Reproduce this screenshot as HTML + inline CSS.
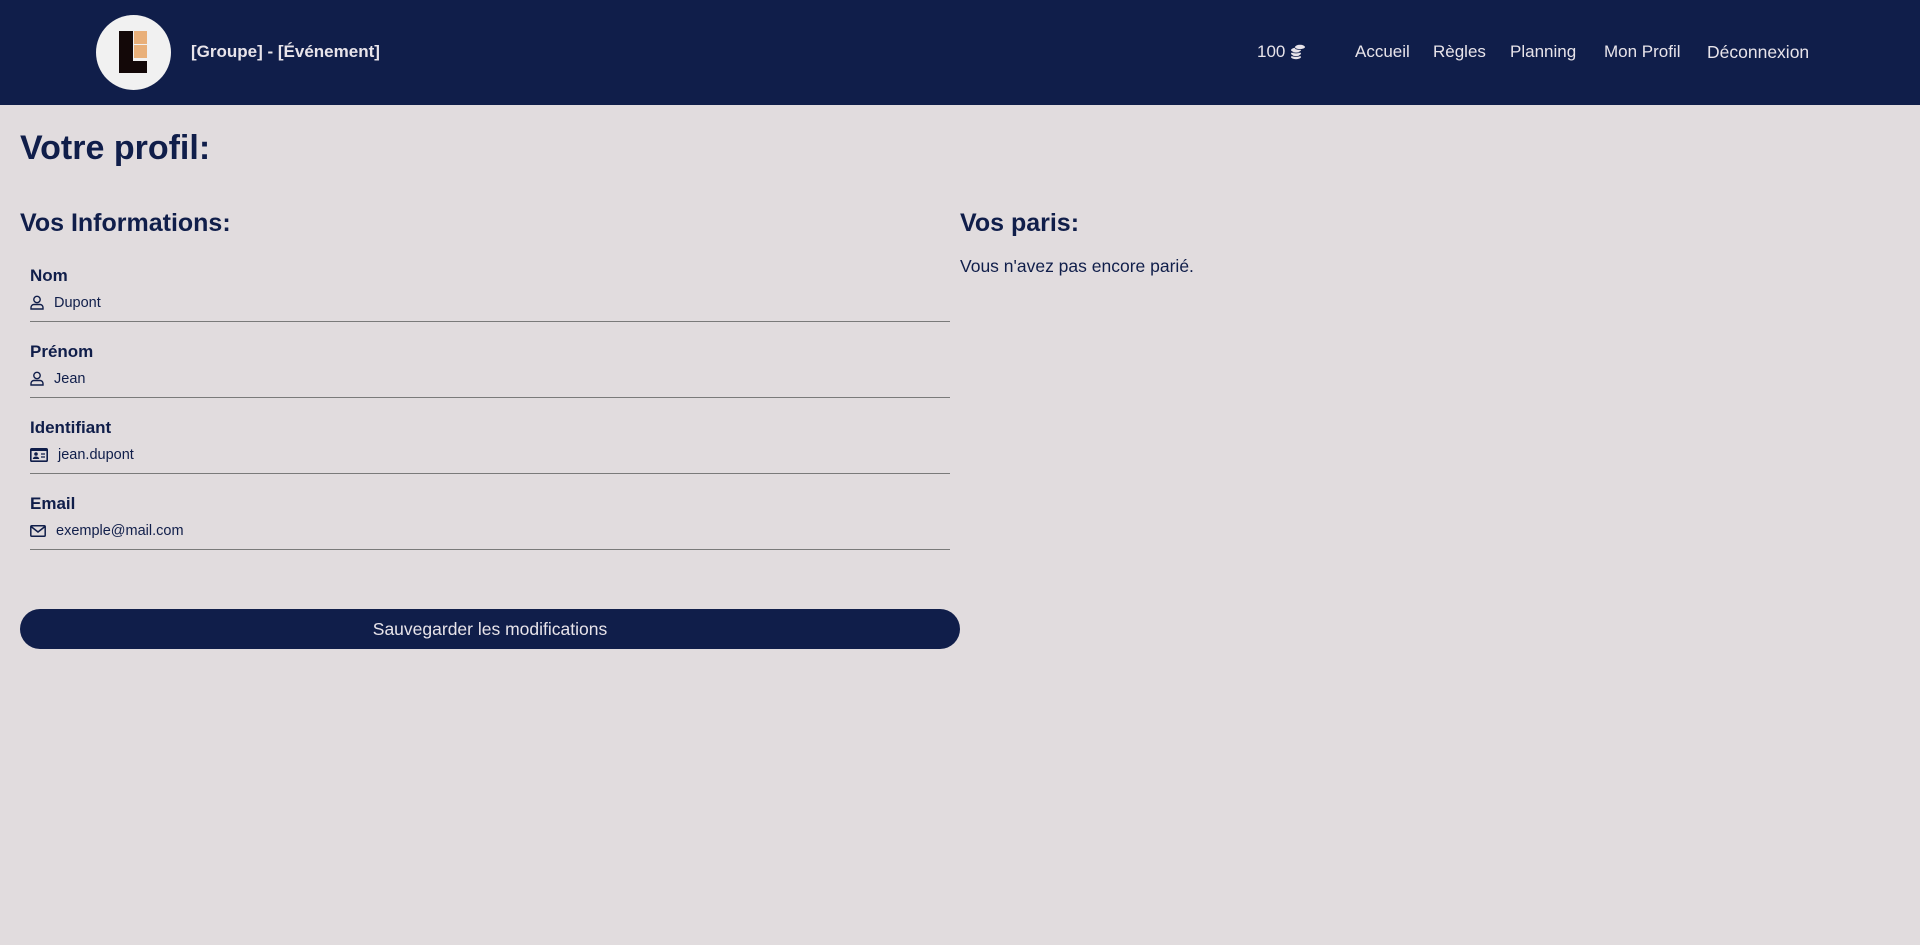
<!DOCTYPE html>
<html><head><meta charset="utf-8"><style>
*{margin:0;padding:0;box-sizing:border-box}
body{width:1920px;height:945px;background:#e1dcde;font-family:"Liberation Sans",sans-serif;color:#101e4a;position:relative;overflow:hidden}
.hdr{position:absolute;left:0;top:0;width:1920px;height:105px;background:#101e4a}
.a{position:absolute;white-space:nowrap}
.nav{color:#e8e4ea;font-size:17px;top:42px}
.lbl{font-weight:bold;font-size:17px;left:30px;color:#101e4a}
.val{font-size:14.5px;color:#101e4a}
.line{position:absolute;left:30px;width:920px;height:1px;background:#7a7a7a}
</style></head><body>
<div class="hdr"></div>
<div class="a" style="left:96px;top:15px;width:75px;height:75px;border-radius:50%;background:#f1f1f1"></div>
<div class="a" style="left:119px;top:31px;width:14px;height:42px;background:#130808"></div>
<div class="a" style="left:119px;top:61px;width:28px;height:12px;background:#130808"></div>
<div class="a" style="left:134px;top:31px;width:13px;height:13px;background:#e9b07a"></div>
<div class="a" style="left:134px;top:45px;width:13px;height:13px;background:#e9b07a"></div>
<div class="a" style="left:191px;top:42px;color:#e8e4ea;font-size:17px;font-weight:bold">[Groupe] - [Événement]</div>
<div class="a nav" style="left:1257px">100</div>
<svg class="a" style="left:1290px;top:44px" width="16" height="16" viewBox="0 0 16 16"><g fill="#e8e4ea"><ellipse cx="6" cy="13" rx="5" ry="2.2"/><ellipse cx="6" cy="9.5" rx="5" ry="2.2"/><ellipse cx="6" cy="6" rx="5" ry="2.2"/><ellipse cx="10" cy="3" rx="5" ry="2.2"/></g><g fill="none" stroke="#101e4a" stroke-width=".8"><path d="M1 11.5q5 2 10 0M1 8q5 2 10 0M5 4.5q5 2 10 0"/></g></svg>
<div class="a nav" style="left:1355px">Accueil</div>
<div class="a nav" style="left:1433px">Règles</div>
<div class="a nav" style="left:1510px">Planning</div>
<div class="a nav" style="left:1604px">Mon Profil</div>
<div class="a nav" style="left:1707px;font-size:17.5px">Déconnexion</div>

<div class="a" style="left:20px;top:129px;font-size:34px;font-weight:bold">Votre profil:</div>
<div class="a" style="left:20px;top:209px;font-size:25px;font-weight:bold">Vos Informations:</div>
<div class="a" style="left:960px;top:209px;font-size:25px;font-weight:bold">Vos paris:</div>
<div class="a" style="left:960px;top:256px;font-size:17.5px">Vous n'avez pas encore parié.</div>

<div class="a lbl" style="top:266px">Nom</div>
<svg class="a" style="left:30px;top:295px" width="14" height="15" viewBox="0 0 14 15"><circle cx="7" cy="4.5" r="3.2" fill="none" stroke="#101e4a" stroke-width="1.4"/><path d="M1 14v-1.5a3 3 0 0 1 3-3h6a3 3 0 0 1 3 3V14z" fill="none" stroke="#101e4a" stroke-width="1.4"/></svg>
<div class="a val" style="left:54px;top:295px">Dupont</div>
<div class="line" style="top:321px"></div>

<div class="a lbl" style="top:342px">Prénom</div>
<svg class="a" style="left:30px;top:371px" width="14" height="15" viewBox="0 0 14 15"><circle cx="7" cy="4.5" r="3.2" fill="none" stroke="#101e4a" stroke-width="1.4"/><path d="M1 14v-1.5a3 3 0 0 1 3-3h6a3 3 0 0 1 3 3V14z" fill="none" stroke="#101e4a" stroke-width="1.4"/></svg>
<div class="a val" style="left:54px;top:371px">Jean</div>
<div class="line" style="top:397px"></div>

<div class="a lbl" style="top:418px">Identifiant</div>
<svg class="a" style="left:30px;top:448px" width="18" height="14" viewBox="0 0 18 14"><rect x=".8" y=".8" width="16.4" height="12.4" rx="1" fill="none" stroke="#101e4a" stroke-width="1.6"/><rect x="1" y="1" width="16" height="2" fill="#101e4a"/><circle cx="6" cy="6" r="1.8" fill="#101e4a"/><path d="M2.8 11a3.2 2.5 0 0 1 6.4 0z" fill="#101e4a"/><path d="M11 6h4M11 9h4" stroke="#101e4a" stroke-width="1.3"/></svg>
<div class="a val" style="left:58px;top:447px">jean.dupont</div>
<div class="line" style="top:473px"></div>

<div class="a lbl" style="top:494px">Email</div>
<svg class="a" style="left:30px;top:525px" width="16" height="12" viewBox="0 0 16 12"><rect x=".8" y=".8" width="14.4" height="10.4" rx="1" fill="none" stroke="#101e4a" stroke-width="1.5"/><path d="M1 1.5l7 5.5 7-5.5" fill="none" stroke="#101e4a" stroke-width="1.5"/></svg>
<div class="a val" style="left:56px;top:523px">exemple@mail.com</div>
<div class="line" style="top:549px"></div>

<div class="a" style="left:20px;top:609px;width:940px;height:40px;border-radius:20px;background:#101e4a;color:#e8e4ea;font-size:17.5px;text-align:center;line-height:40px">Sauvegarder les modifications</div>
</body></html>
